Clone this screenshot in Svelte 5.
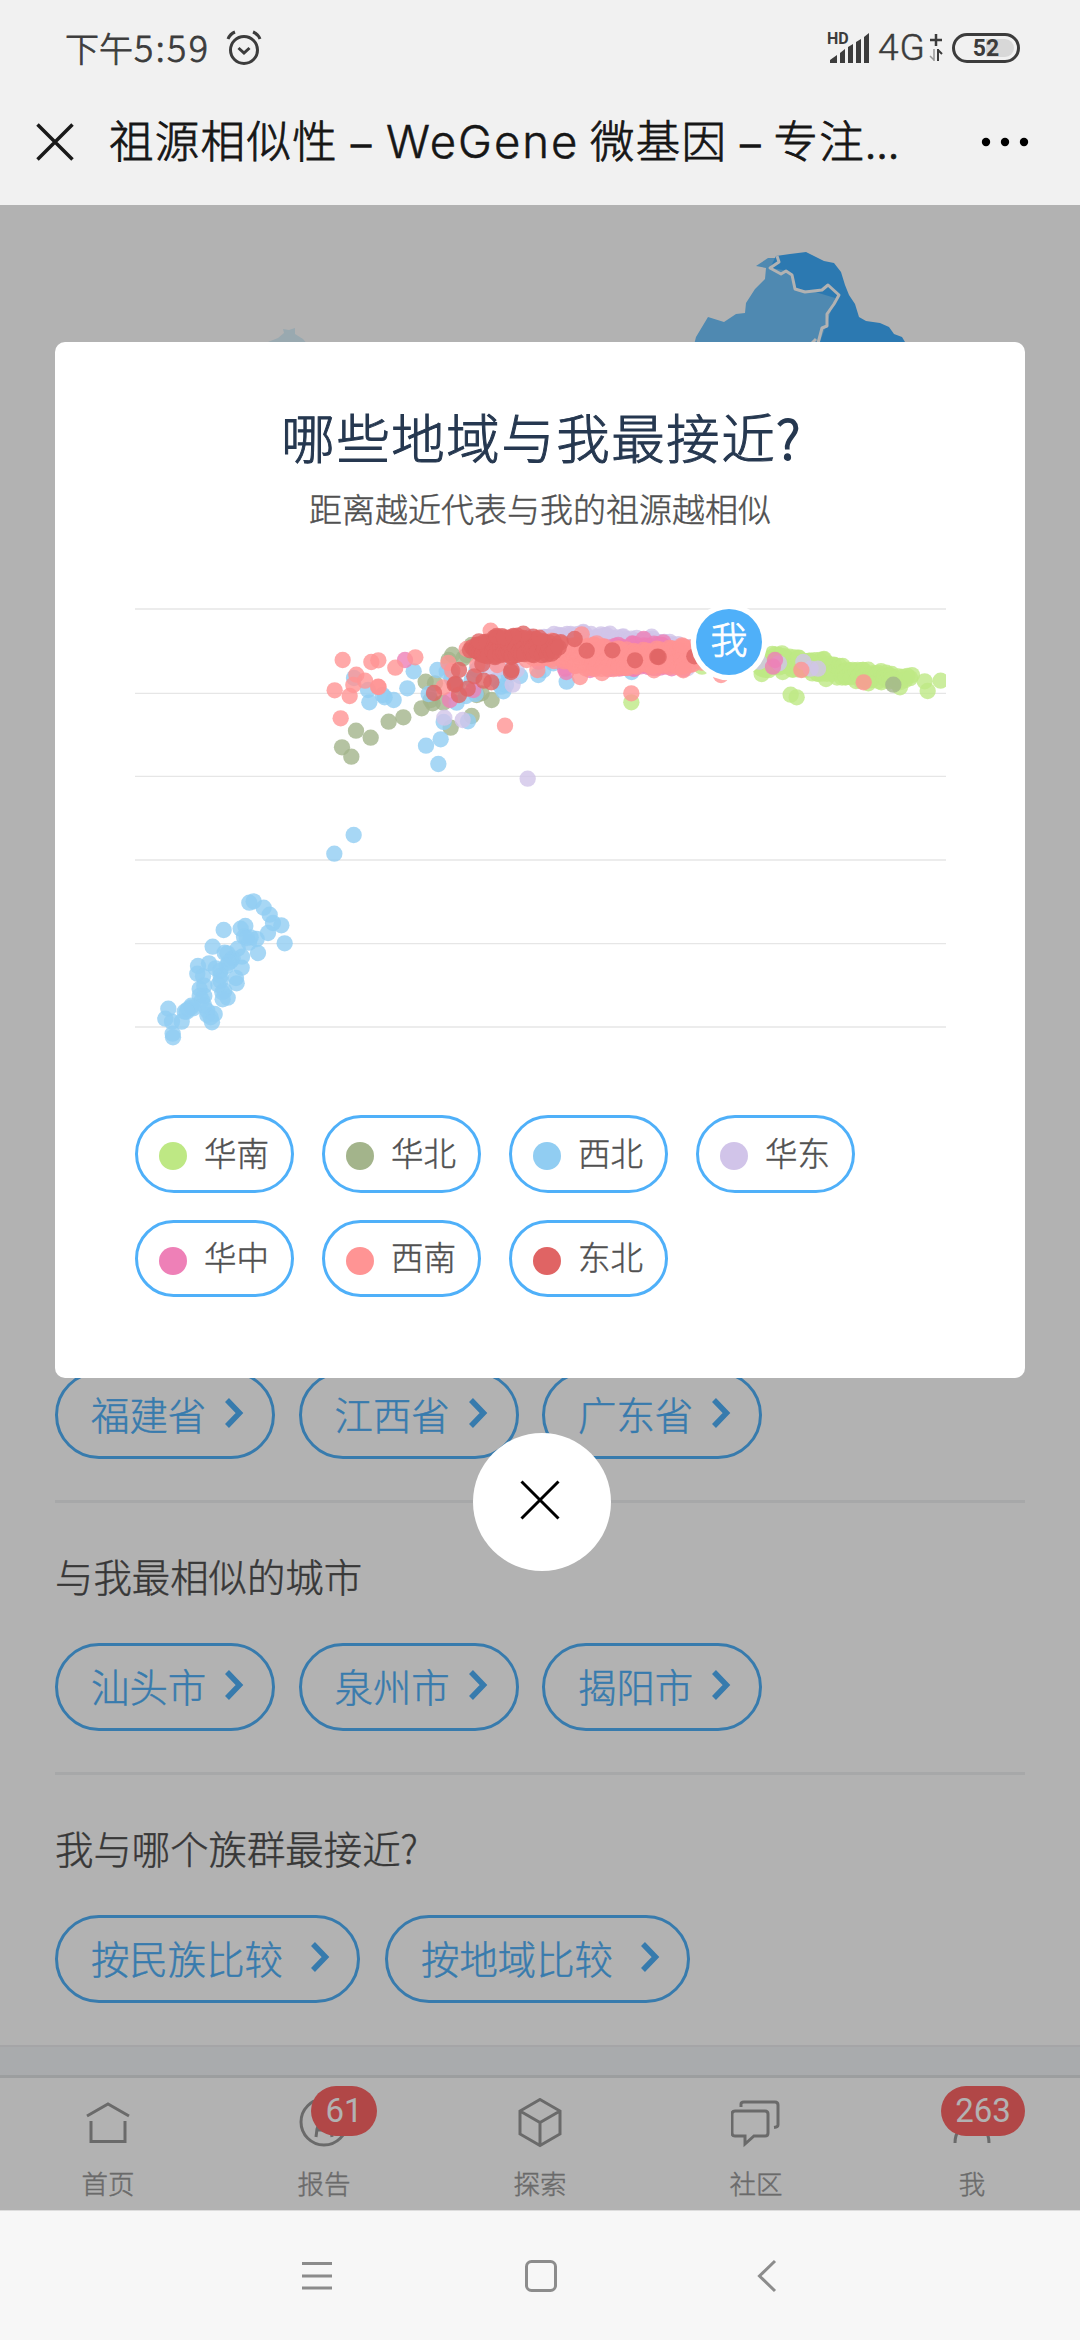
<script>
  const provinces = ['福建省', '江西省', '广东省'];
  const cities = ['汕头市', '泉州市', '揭阳市'];
  const comparisons = ['按民族比较', '按地域比较'];

  const legend = [
    { name: '华南', color: '#bee884' },
    { name: '华北', color: '#a3b48b' },
    { name: '西北', color: '#91cdf2' },
    { name: '华东', color: '#d1c4e9' },
    { name: '华中', color: '#ee80b7' },
    { name: '西南', color: '#ff9494' },
    { name: '东北', color: '#e06464' }
  ];

  const gridLines = [57, 310, 559, 810, 1061, 1311];

  // Fills a band given as [x, top, bottom] stops with evenly spread samples.
  function band(stops) {
    const out = [];
    let n = 0;
    for (let i = 0; i < stops.length - 1; i++) {
      const [x0, t0, b0] = stops[i];
      const [x1, t1, b1] = stops[i + 1];
      for (let x = x0; x < x1; x += 13) {
        const k = (x - x0) / (x1 - x0);
        const top = t0 + (t1 - t0) * k;
        const bottom = b0 + (b1 - b0) * k;
        const rows = Math.max(1, Math.ceil((bottom - top) / 13));
        for (let r = 0; r <= rows; r++) {
          n++;
          out.push([x + ((n * 7) % 13) - 6, top + ((bottom - top) * r) / rows + ((n * 5) % 11) - 5]);
        }
      }
    }
    return out;
  }

  const series = [
    {
      color: '#bee884',
      points: [
        ...band([[1385, 200, 240], [1445, 193, 232], [1495, 207, 238], [1570, 214, 252], [1630, 232, 262], [1695, 243, 272], [1755, 249, 272], [1805, 262, 272], [1832, 258, 262]]),
        [1874, 274], [1883, 303], [1922, 272], [1800, 292], [1472, 314], [1490, 322], [994, 337], [1206, 230],
        [1572, 207], [1385, 252], [1578, 267], [1705, 280], [1448, 246], [1446, 190], [1495, 204], [1532, 213]
      ]
    },
    {
      color: '#a3b48b',
      points: [
        [457, 194], [446, 210], [490, 205], [515, 165], [500, 195], [377, 275], [405, 280], [365, 355], [398, 340],
        [392, 330], [430, 338], [545, 310], [575, 330], [515, 378], [452, 413], [310, 382], [266, 395], [168, 422],
        [212, 443], [126, 472], [154, 500], [530, 315], [1780, 284]
      ]
    },
    {
      color: '#91cdf2',
      points: [
        ...[
          [671, 735], [613, 791], [358, 938], [371, 934], [401, 953], [419, 974], [429, 999], [454, 1006], [464, 1060],
          [414, 1029], [384, 1089], [380, 1047], [346, 1008], [332, 1016], [281, 1020], [342, 1040], [362, 1042],
          [357, 1058], [350, 1044], [248, 1070], [323, 1076], [336, 1100], [284, 1088], [292, 1090], [308, 1105],
          [303, 1112], [335, 1133], [296, 1118], [290, 1128], [318, 1164], [320, 1180], [237, 1120], [204, 1128],
          [202, 1151], [219, 1159], [257, 1135], [271, 1143], [272, 1158], [265, 1184], [272, 1172], [283, 1203],
          [277, 1207], [293, 1223], [278, 1228], [209, 1197], [223, 1187], [209, 1218], [223, 1218], [216, 1230],
          [184, 1247], [184, 1252], [174, 1258], [164, 1265], [155, 1295], [115, 1256], [106, 1286], [126, 1295],
          [128, 1331], [129, 1342], [232, 1262], [232, 1275], [242, 1282], [254, 1272], [246, 1297], [222, 1246],
          [190, 1255], [170, 1265]
        ].map(([x, y]) => [x - 510, y]),
        [162, 264], [204, 300], [208, 337], [248, 315], [254, 322], [281, 330], [322, 295], [341, 244], [412, 240],
        [386, 312], [440, 245], [455, 250], [498, 318], [470, 338], [527, 312], [530, 240], [431, 396], [504, 394],
        [422, 448], [378, 467], [415, 522], [610, 304], [603, 290], [618, 285], [626, 255], [660, 258], [715, 255],
        [730, 240], [760, 220], [800, 275], [995, 246], [470, 285], [515, 270], [590, 270], [455, 265]
      ]
    },
    {
      color: '#d1c4e9',
      points: [
        ...band([[700, 150, 190], [760, 140, 190], [810, 135, 190], [850, 133, 190], [910, 137, 200], [980, 145, 200], [1055, 150, 210], [1110, 161, 220], [1165, 170, 230]]),
        [762, 132], [812, 132], [850, 126], [903, 133], [930, 131], [1055, 140], [690, 140], [433, 383], [488, 390],
        [638, 284], [683, 566], [1377, 215], [1437, 220], [1510, 216], [1532, 236], [1554, 236], [600, 232],
        [650, 240], [540, 225], [575, 240]
      ]
    },
    {
      color: '#ee80b7',
      points: [
        ...band([[880, 180, 225], [930, 172, 235], [1000, 165, 232], [1080, 165, 230], [1150, 185, 230]]),
        [315, 210], [450, 330], [1031, 147], [1090, 157], [799, 246], [795, 236], [958, 236], [716, 215], [955, 165],
        [870, 240], [1150, 238], [1425, 210], [1419, 230], [520, 300]
      ]
    },
    {
      color: '#ff9494',
      points: [
        ...band([[690, 180, 200], [780, 163, 212], [830, 168, 228], [890, 168, 234], [960, 179, 232], [1000, 184, 228], [1080, 180, 225], [1150, 173, 228], [1185, 177, 215]]),
        [128, 210], [214, 216], [235, 211], [286, 233], [346, 202], [169, 254], [195, 272], [160, 285], [104, 301],
        [236, 291], [234, 290], [149, 318], [122, 385], [445, 219], [457, 242], [430, 292], [500, 177], [572, 122],
        [615, 407], [592, 225], [712, 240], [845, 133], [890, 160], [840, 261], [906, 249], [1062, 241], [1150, 241],
        [1146, 166], [994, 310], [1263, 255], [1504, 240], [1691, 277], [532, 225], [1205, 218], [680, 210], [755, 152]
      ]
    },
    {
      color: '#e06464',
      points: [
        ...band([[515, 172, 176], [540, 160, 198], [590, 143, 196], [650, 142, 198], [700, 145, 191], [750, 160, 190], [780, 157, 165]]),
        [670, 131], [718, 143], [537, 154], [590, 138], [640, 138], [612, 142], [477, 240], [466, 282], [464, 284],
        [402, 309], [503, 296], [477, 315], [523, 259], [551, 272], [574, 277], [633, 246], [635, 240], [547, 222],
        [824, 147], [860, 182], [937, 181], [1005, 211], [1072, 200], [1076, 201], [1183, 199]
      ]
    }
  ];
</script>

{#snippet chevron()}
  <svg class="chevron" viewBox="0 0 20 30"><path d="M3 2 L15.500 15 L3 28" /></svg>
{/snippet}

{#snippet links(items, wide)}
  <div class="links" class:loose={wide}>
    {#each items as item}
      <button class="link" class:wide><span>{item}</span>{@render chevron()}</button>
    {/each}
  </div>
{/snippet}

<div class="screen">
  <header>
    <div class="status">
      <span class="time">下午<b>5:59</b></span>
      <svg class="alarm" viewBox="0 0 36 36">
        <circle cx="18" cy="20" r="13.500" />
        <path d="M12.500 18 L18 23 L23.500 18 M2 9 Q4 4 9 2 M34 9 Q32 4 27 2" />
      </svg>
      <span class="fill"></span>
      <svg class="signal" viewBox="0 0 42 32">
        <text x="-1" y="12">HD</text>
        <path d="M2 31 V28 L9 23 V31Z M12 31 V21 L17 17 V31Z M20 31 V15 L25 12 V31Z M28 31 V10 L33 7 V31Z M36 31 V5 L41 1 V31Z" />
      </svg>
      <span class="net">4G</span>
      <svg class="data" viewBox="0 0 14 30">
        <path d="M7 1 V13 M1 7 H13" stroke-width="2.500" />
        <path d="M5 16 V28 M5 27 L1 23" stroke-width="1.500" opacity="0.5" />
        <path d="M9 28 V16 M9 17 L13 21" stroke-width="2" />
      </svg>
      <div class="battery"><span>52</span></div>
    </div>
    <div class="bar">
      <svg class="close" viewBox="0 0 38 38"><path d="M1.500 1.500 L36.500 36.500 M36.500 1.500 L1.500 36.500" /></svg>
      <h1>祖源相似性<i>–</i><em>WeGene</em>微基因<i>–</i>专注<span class="dots">...</span></h1>
      <svg class="more" viewBox="0 0 50 10"><circle cx="6" cy="5" r="4.200" /><circle cx="25" cy="5" r="4.200" /><circle cx="44" cy="5" r="4.200" /></svg>
    </div>
  </header>

  <main>
    <section class="map">
      <svg viewBox="0 0 1080 200">
        <path fill="#dcf2fd" d="M268 137 L278 133 L284 128 L283 124 L289 125 L295 123 L295 129 L303 134 L308 140 V200 H268Z" />
        <path fill="#71c5fe" d="M694 140 L696 132 L708 112 L724 117 L736 109 L745 108 L746 98 L755 84 L765 74 L766 63 L756 61 L768 53 L778 53 L790 50 L830 80 L844 90 L828 118 L824 142 V200 H694Z" />
        <path fill="#40aefe" d="M776 51 L790 49 L806 47 L812 50 L824 56 L834 58 L841 67 L845 80 L849 90 L855 99 L859 112 L866 116 L880 118 L889 122 L894 129 L902 132 L905 137 V200 H818 V142 L827 118 L835 93 L812 86 L795 84 L789 66 L770 63Z" />
        <path class="border" d="M777 51 L779 57 L770 63 L781 69 L786 66 L792 70 L795 84 L805 87 L822 85 L828 80 L839 90 L834 99 L827 109 L827 121 L822 123 L817 142 M808 142 L816 134" />
      </svg>
    </section>
    <section class="group first">{@render links(provinces, false)}</section>
    <section class="group">
      <h2>与我最相似的城市</h2>
      {@render links(cities, false)}
    </section>
    <section class="group">
      <h2>我与哪个族群最接近?</h2>
      {@render links(comparisons, true)}
    </section>
    <div class="spacer"></div>

    <nav class="tabs">
      <div class="tab">
        <svg viewBox="0 0 50 50"><path d="M4 18 L25 6 L46 18 M8 23 V43.500 H42 V23" /></svg>
        <span>首页</span>
      </div>
      <div class="tab">
        <svg viewBox="0 0 50 50"><circle cx="25" cy="24" r="23" /><path d="M17 39 L18 31 L25 10 L32 31 L33 39 M18 32 H32" /></svg>
        <span>报告</span>
        <b class="badge two">61</b>
      </div>
      <div class="tab">
        <svg viewBox="0 0 50 50"><path d="M25 1.500 L45 13 V36 L25 47.500 L5 36 V13Z M5 13 L25 24.500 L45 13 M25 24.500 V47.500" /></svg>
        <span>探索</span>
      </div>
      <div class="tab">
        <svg viewBox="0 0 50 50"><path d="M4 13 H34 Q37 13 37 16 V35 Q37 38 34 38 H23 L14 46 V38 H4 Q1 38 1 35 V16 Q1 13 4 13Z M10 9 V6 Q10 4 13 4 H44 Q47 4 47 7 V27 Q47 29 43 29.500" /></svg>
        <span>社区</span>
      </div>
      <div class="tab">
        <svg viewBox="0 0 50 50"><circle cx="25" cy="15" r="11" /><path d="M8 45 Q8 28 25 28 Q42 28 42 45" /></svg>
        <span>我</span>
        <b class="badge three">263</b>
      </div>
    </nav>

    <div class="scrim">
      <div class="modal">
        <h3>哪些地域与我最接近<span class="mark">?</span></h3>
        <p>距离越近代表与我的祖源越相似</p>
        <svg class="chart" viewBox="-495 0 2433 1380">
          {#each gridLines as y}
            <line x1="-495" x2="1938" y1={y} y2={y} />
          {/each}
          {#each series as s}
            <g fill={s.color}>
              {#each s.points as [x, y]}
                <circle cx={x} cy={y} r="24.500" />
              {/each}
            </g>
          {/each}
          <circle class="halo" cx="1287" cy="156" r="115" />
          <circle class="me" cx="1287" cy="156" r="99" />
          <text x="1287" y="191">我</text>
        </svg>
        <div class="legend">
          {#each legend as item}
            <div class="key">
              <svg viewBox="0 0 28 28"><circle cx="14" cy="14" r="14" fill={item.color} /></svg>
              <span>{item.name}</span>
            </div>
          {/each}
        </div>
      </div>
      <button class="dismiss" aria-label="关闭">
        <svg viewBox="0 0 40 40"><path d="M1.500 1.500 L38.500 38.500 M38.500 1.500 L1.500 38.500" /></svg>
      </button>
    </div>
  </main>

  <footer>
    <svg viewBox="0 0 34 34"><path d="M2 4.500 H32 M2 17 H32 M2 29 H32" /></svg>
    <svg viewBox="0 0 34 34"><rect x="2.500" y="2.500" width="29" height="29" rx="5" /></svg>
    <svg viewBox="0 0 34 34"><path d="M27 2 L11.500 17 L27 32" /></svg>
  </footer>
</div>

<style>
  :global(body) { margin: 0; }
  .screen {
    width: 1080px;
    height: 2340px;
    display: flex;
    flex-direction: column;
    overflow: hidden;
    font-family: 'Noto Sans CJK SC', sans-serif;
    font-weight: 300;
    -webkit-text-stroke: 0.45px currentColor;
    background: #f7f7f7;
  }
  h1, h2, h3, p { margin: 0; font-weight: 300; }
  button { font: inherit; padding: 0; margin: 0; background: none; }
  svg { display: block; flex: none; }

  header { height: 205px; flex: none; background: #f1f1f1; }
  .status {
    height: 95px;
    box-sizing: border-box;
    padding: 0 60px 0 65px;
    display: flex;
    align-items: center;
    color: #3c3c3c;
  }
  .time { font-size: 34px; line-height: 50px; white-space: nowrap; width: 161px; margin-top: -2px; -webkit-text-stroke-width: 0.8px; }
  .time b { font-weight: 300; font-size: 36px; letter-spacing: 2.4px; margin-left: 1px; }
  .alarm { width: 36px; height: 36px; fill: none; stroke: #3c3c3c; stroke-width: 3; }
  .fill { flex: 1; }
  .signal { width: 42px; height: 32px; fill: #3c3c3c; overflow: visible; }
  .signal text { font: 700 16px Roboto, sans-serif; }
  .net { font: 300 37px/50px Roboto, sans-serif; width: 51px; margin-left: 8px; letter-spacing: 1px; }
  .data { width: 14px; height: 30px; fill: none; stroke: #3c3c3c; }
  .battery {
    width: 68px;
    height: 30px;
    margin-left: 9px;
    box-sizing: border-box;
    border: 3px solid #3c3c3c;
    border-radius: 15px;
    padding: 3px;
    display: flex;
  }
  .battery span {
    flex: 1;
    border-radius: 9px;
    background: linear-gradient(90deg, #f1f1f1 50%, #d8d8d8 50%);
    text-align: center;
    font: 700 23px/19px Roboto, sans-serif;
    -webkit-text-stroke: 0;
  }
  .bar { height: 94px; display: flex; align-items: center; padding: 0 50px 0 36px; }
  .close { width: 38px; height: 38px; fill: none; stroke: #1a1a1a; stroke-width: 3.5; }
  h1 { flex: 1; margin-left: 35px; font-size: 44.5px; letter-spacing: 1.3px; line-height: 60px; white-space: nowrap; color: #161616; margin-top: -3px; -webkit-text-stroke-width: 0.8px; }
  h1 i { display: inline-block; width: 46px; text-align: center; font-style: normal; letter-spacing: 0; -webkit-text-stroke-width: 1.6px; }
  h1 em { display: inline-block; width: 204px; font: 300 45.5px/60px Inter, sans-serif; letter-spacing: 2px; margin-left: 2px; -webkit-text-stroke-width: 0.5px; }
  .dots { letter-spacing: 0.3px; }
  .more { width: 50px; height: 10px; fill: #000; }

  main { position: relative; height: 2005px; flex: none; background: #fff; display: flex; flex-direction: column; }
  .map { height: 1166px; flex: none; overflow: hidden; }
  .map svg { width: 1080px; height: 200px; }
  .border { fill: none; stroke: #fff; stroke-width: 3; stroke-linejoin: round; }

  .group { margin: 0 55px; height: 272px; box-sizing: border-box; border-top: 3px solid #f0f1f3; flex: none; }
  .group.first { height: 129px; border-top: 0; }
  h2 { height: 140px; font-size: 38.4px; line-height: 145px; color: #505050; white-space: nowrap; }
  .links { display: flex; gap: 23.500px; }
  .links.loose { gap: 25px; }
  .link {
    width: 220px;
    height: 88px;
    box-sizing: border-box;
    border: 3px solid #50b0f8;
    border-radius: 44px;
    padding: 0 28px 0 33px;
    display: flex;
    align-items: center;
    justify-content: space-between;
    color: #50b0f8;
    font-size: 38.4px;
    line-height: 80px;
    white-space: nowrap;
  }
  .link span { margin-top: -5px; }
  .link.wide { width: 305px; padding-right: 27px; }
  .chevron { width: 20px; height: 30px; margin-bottom: 4px; fill: none; stroke: #50b0f8; stroke-width: 5.5; }
  .spacer { height: 33px; margin-top: 1px; flex: none; box-sizing: border-box; border-top: 2px solid #ecedef; border-bottom: 3px solid #e0e2e4; background: #f2f5f8; }

  .tabs { flex: 1; display: flex; }
  .tab { position: relative; width: 216px; display: flex; flex-direction: column; align-items: center; color: #999; font-size: 26.5px; }
  .tab svg { width: 50px; height: 50px; margin-top: 20px; fill: none; stroke: #999; stroke-width: 3; }
  .tab span { line-height: 36px; margin-top: 17px; }
  .badge {
    position: absolute;
    top: 8px;
    height: 50px;
    border-radius: 25px;
    background: #fe6666;
    color: #fff;
    font: 400 33px/50px Roboto, sans-serif;
    text-align: center;
    -webkit-text-stroke: 0;
  }
  .two { left: 95px; width: 66px; }
  .three { left: 77px; width: 84px; }

  .scrim {
    position: absolute;
    inset: 0;
    background: rgba(0, 0, 0, 0.3);
    display: flex;
    flex-direction: column;
    align-items: center;
    padding-top: 137px;
  }
  .modal { width: 970px; height: 1036px; flex: none; box-sizing: border-box; border-radius: 10px; background: #fff; padding: 0 80px; }
  h3 { margin-top: 54px; font-size: 53.5px; letter-spacing: 1.5px; line-height: 80px; text-align: center; color: #263850; white-space: nowrap; -webkit-text-stroke-width: 1px; }
  .mark { -webkit-text-stroke-width: 1.8px; margin-right: -3px; }
  p { margin-top: 8px; font-size: 33px; line-height: 48px; text-align: center; color: #505050; white-space: nowrap; }
  .chart { width: 811px; height: 460px; margin-top: 58px; }
  .chart line { stroke: #e6e6e6; stroke-width: 4; }
  .chart g circle { fill-opacity: 0.8; }
  .halo { fill: #fff; }
  .me { fill: #4fb0f9; }
  .chart text { font-size: 111px; fill: #fff; text-anchor: middle; stroke: #fff; stroke-width: 2.5px; }
  .legend { margin-top: 65px; display: flex; flex-wrap: wrap; gap: 27px 28px; }
  .key {
    width: 159px;
    height: 77.500px;
    box-sizing: border-box;
    border: 3px solid #4fb0f9;
    border-radius: 39px;
    padding-left: 21px;
    display: flex;
    align-items: center;
    gap: 17px;
    color: #505050;
    font-size: 32.500px;
    line-height: 60px;
  }
  .key span { margin-top: -4px; }
  .key svg { width: 28px; height: 28px; margin-top: 5px; }
  .dismiss {
    margin-top: 55px;
    margin-left: 3px;
    width: 138px;
    height: 138px;
    flex: none;
    border: 0;
    border-radius: 50%;
    background: #fff;
    display: flex;
    align-items: center;
    justify-content: center;
  }
  .dismiss svg { width: 40px; height: 40px; margin: -4px 3px 0 0; fill: none; stroke: #000; stroke-width: 3; }

  footer { flex: 1; display: flex; justify-content: center; align-items: center; gap: 190px; padding-left: 2px; background: #f7f7f7; border-top: 1px solid #ddd; }
  footer svg { width: 34px; height: 34px; fill: none; stroke: #8c8c8c; stroke-width: 3; }
</style>
